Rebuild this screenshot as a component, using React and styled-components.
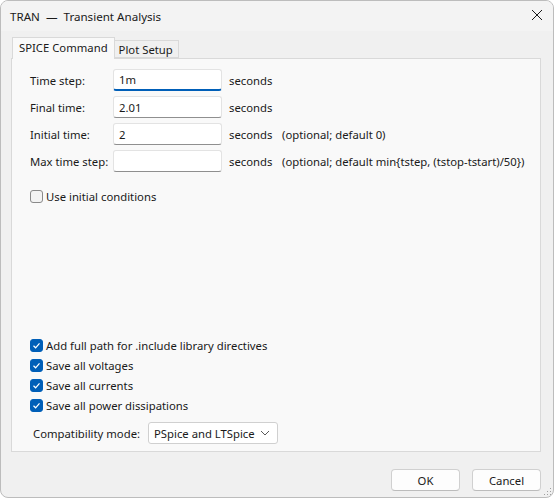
import React, { useState } from "react";
import styled, { createGlobalStyle } from "styled-components";

const GlobalStyle = createGlobalStyle`
  html, body {
    margin: 0;
    padding: 0;
    background: #ffffff;
  }
  body {
    font-family: "Segoe UI", "Noto Sans", "Open Sans", sans-serif;
    font-size: 11.3px;
    color: #1a1a1a;
  }
`;

const Window = styled.div`
  box-sizing: border-box;
  width: 554px;
  height: 498px;
  display: flex;
  flex-direction: column;
  background: #f0f0f0;
  border: 1px solid #bcbcbc;
  border-radius: 8px;
  overflow: hidden;
  position: relative;
  white-space: nowrap;
`;

const TitleBar = styled.div`
  height: 30px;
  flex-shrink: 0;
  display: flex;
  align-items: center;
  justify-content: space-between;
  padding: 0 5px 0 9px;
  background: #f3f3f3;
`;

const Title = styled.span`
  font-size: 11.6px;
  color: #1a1a1a;
  white-space: pre;
`;

const CloseButton = styled.button`
  width: 22px;
  height: 22px;
  margin-top: -2px;
  border: none;
  background: transparent;
  padding: 0;
  display: flex;
  align-items: center;
  justify-content: center;
`;

const Body = styled.div`
  flex: 1;
  display: flex;
  flex-direction: column;
  padding: 6px 12px 0 10px;
`;

const TabRow = styled.div`
  display: flex;
  align-items: flex-end;
  height: 21px;
  padding-left: 1px;
`;

const Tab = styled.div`
  box-sizing: border-box;
  height: ${(p) => (p.active ? "22px" : "18px")};
  margin-bottom: ${(p) => (p.active ? "-1px" : "0")};
  padding: ${(p) => (p.active ? "2px 6px 0 6px" : "1px 5px 0 4px")};
  background: ${(p) => (p.active ? "#f9f9f9" : "#f0f0f0")};
  border: 1px solid #d9d9d9;
  border-bottom: ${(p) => (p.active ? "none" : "1px solid #d9d9d9")};
  border-left: ${(p) => (p.active ? "1px solid #d9d9d9" : "none")};
  position: relative;
  z-index: ${(p) => (p.active ? 1 : 0)};
  color: #1a1a1a;
`;

const Panel = styled.div`
  box-sizing: border-box;
  height: 394px;
  display: flex;
  flex-direction: column;
  background: #f9f9f9;
  border: 1px solid #d9d9d9;
  padding: 10px 18px 7px 18px;
`;

const Form = styled.div`
  display: flex;
  flex-direction: column;
  gap: 5px;
`;

const FieldRow = styled.div`
  display: flex;
  align-items: center;
  height: 22px;
`;

const FieldLabel = styled.label`
  width: 83px;
  flex-shrink: 0;
`;

const TextBox = styled.input`
  box-sizing: border-box;
  width: 109px;
  height: 22px;
  padding: 0 5px;
  font: inherit;
  color: #1a1a1a;
  background: #ffffff;
  border: 1px solid #e3e3e3;
  border-bottom: ${(p) => (p.focused ? "2px solid #005fb8" : "1px solid #8f8f8f")};
  border-radius: 3px;
  outline: none;
`;

const Unit = styled.span`
  margin-left: 7px;
  width: 43px;
  flex-shrink: 0;
`;

const Hint = styled.span`
  margin-left: 10px;
`;

const CheckRow = styled.label`
  display: flex;
  align-items: center;
  height: 20px;
  gap: 3px;
  margin-top: ${(p) => p.gapTop || 0}px;
`;

const Box = styled.span`
  box-sizing: border-box;
  width: 13px;
  height: 13px;
  border-radius: 3px;
  display: flex;
  align-items: center;
  justify-content: center;
  background: ${(p) => (p.checked ? "#005fb8" : "#f3f3f3")};
  border: 1px solid ${(p) => (p.checked ? "#005fb8" : "#8a8a8a")};
`;

const Spacer = styled.div`
  flex: 1;
`;

const CompatRow = styled.div`
  display: flex;
  align-items: center;
  height: 22px;
  margin-top: 7px;
  padding-left: 3px;
`;

const CompatLabel = styled.span`
  width: 115px;
  flex-shrink: 0;
`;

const Select = styled.div`
  box-sizing: border-box;
  width: 130px;
  height: 22px;
  display: flex;
  align-items: center;
  justify-content: space-between;
  padding: 0 7px 0 5px;
  background: #ffffff;
  border: 1px solid #d0d0d0;
  border-radius: 3px;
`;

const Footer = styled.div`
  display: flex;
  justify-content: flex-end;
  gap: 12px;
  padding: 17px 0 0 0;
`;

const Button = styled.button`
  box-sizing: border-box;
  width: 69px;
  height: 22px;
  font: inherit;
  color: #1a1a1a;
  background: #fdfdfd;
  border: 1px solid #d0d0d0;
  border-bottom-color: #bcbcbc;
  border-radius: 4px;
  padding: 0;
`;

const Grip = styled.svg`
  position: absolute;
  right: 1px;
  bottom: 1px;
`;

const Check = () => (
  <svg width="9" height="9" viewBox="0 0 9 9">
    <path d="M1.5 4.8 L3.6 6.8 L7.5 2.3" fill="none" stroke="#ffffff" strokeWidth="1.2" />
  </svg>
);

const CheckItem = ({ checked, label, gapTop }) => (
  <CheckRow gapTop={gapTop}>
    <Box checked={checked}>{checked && <Check />}</Box>
    <span>{label}</span>
  </CheckRow>
);

const fields = [
  { label: "Time step:", value: "1m", focused: true },
  { label: "Final time:", value: "2.01" },
  { label: "Initial time:", value: "2", hint: "(optional; default 0)" },
  { label: "Max time step:", value: "", hint: "(optional; default min{tstep, (tstop-tstart)/50})" },
];

const App = () => {
  const [values, setValues] = useState(fields.map((f) => f.value));

  return (
    <>
      <GlobalStyle />
      <Window>
        <TitleBar>
          <Title>{"TRAN  —  Transient Analysis"}</Title>
          <CloseButton>
            <svg width="12" height="12" viewBox="0 0 12 12">
              <path d="M1 1 L11 11 M11 1 L1 11" stroke="#1a1a1a" strokeWidth="1" />
            </svg>
          </CloseButton>
        </TitleBar>
        <Body>
          <TabRow>
            <Tab active>SPICE Command</Tab>
            <Tab>Plot Setup</Tab>
          </TabRow>
          <Panel>
            <Form>
              {fields.map((f, i) => (
                <FieldRow key={f.label}>
                  <FieldLabel>{f.label}</FieldLabel>
                  <TextBox
                    focused={f.focused}
                    value={values[i]}
                    onChange={(e) => {
                      const next = [...values];
                      next[i] = e.target.value;
                      setValues(next);
                    }}
                  />
                  <Unit>seconds</Unit>
                  {f.hint && <Hint>{f.hint}</Hint>}
                </FieldRow>
              ))}
            </Form>
            <CheckItem gapTop={14} label="Use initial conditions" />
            <Spacer />
            <CheckItem checked label="Add full path for .include library directives" />
            <CheckItem checked label="Save all voltages" />
            <CheckItem checked label="Save all currents" />
            <CheckItem checked label="Save all power dissipations" />
            <CompatRow>
              <CompatLabel>Compatibility mode:</CompatLabel>
              <Select>
                <span>PSpice and LTSpice</span>
                <svg width="10" height="6" viewBox="0 0 10 6">
                  <path d="M1 1 L5 5 L9 1" fill="none" stroke="#5a5a5a" strokeWidth="1" />
                </svg>
              </Select>
            </CompatRow>
          </Panel>
          <Footer>
            <Button>OK</Button>
            <Button>Cancel</Button>
          </Footer>
        </Body>
        <Grip width="8" height="8" viewBox="0 0 8 8">
          <rect x="6" y="0" width="1" height="1" fill="#a0a0a0" />
          <rect x="3" y="3" width="1" height="1" fill="#a0a0a0" />
          <rect x="6" y="3" width="1" height="1" fill="#a0a0a0" />
          <rect x="0" y="6" width="1" height="1" fill="#a0a0a0" />
          <rect x="3" y="6" width="1" height="1" fill="#a0a0a0" />
          <rect x="6" y="6" width="1" height="1" fill="#a0a0a0" />
        </Grip>
      </Window>
    </>
  );
};

export default App;
